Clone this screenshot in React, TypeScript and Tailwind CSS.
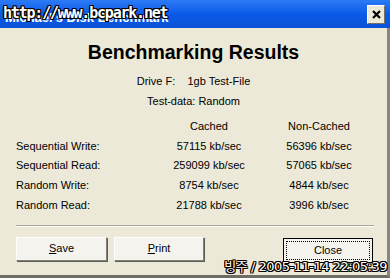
const rows = [
  { label: "Sequential Write:", cached: "57115 kb/sec", nonCached: "56396 kb/sec" },
  { label: "Sequential Read:", cached: "259099 kb/sec", nonCached: "57065 kb/sec" },
  { label: "Random Write:", cached: "8754 kb/sec", nonCached: "4844 kb/sec" },
  { label: "Random Read:", cached: "21788 kb/sec", nonCached: "3996 kb/sec" },
];

const outline =
  "[text-shadow:1px_0_0_#000,-1px_0_0_#000,0_1px_0_#000,0_-1px_0_#000,1px_1px_0_#000,-1px_-1px_0_#000,1px_-1px_0_#000,-1px_1px_0_#000]";

export default function App() {
  return (
    <div className="relative w-[390px] h-[278px] flex flex-col bg-[#ece9d8] font-['Liberation_Sans',Arial,sans-serif] text-[11px] text-black overflow-hidden">
      {/* Title bar */}
      <div className="relative h-[28px] shrink-0 flex items-center justify-between pl-[5px] pr-[4px] bg-gradient-to-b from-[#2b7af5] via-[#0a5ae8] to-[#0b52d6]">
        <span className="text-white font-bold text-[13px] mt-[8px] tracking-[0px]">Michael's Disk Benchmark</span>
        <div className="w-[18px] h-[19px] mt-[1px] mr-[1px] flex items-center justify-center bg-[#ece9d8] border border-t-white border-l-white border-r-[#716f64] border-b-[#716f64]">
          <svg width="9" height="9" viewBox="0 0 9 9">
            <path d="M1 1L8 8M8 1L1 8" stroke="#000" strokeWidth="2.2" />
          </svg>
        </div>
        <span className={`absolute left-[3px] top-[2px] text-white font-bold text-[15px] font-['DejaVu_Sans_Mono',monospace] tracking-[-1.2px] ${outline}`}>
          http://www.bcpark.net
        </span>
      </div>

      {/* Body */}
      <div className="flex-1 flex flex-col border-r-[3px] border-b-[3px] border-r-[#8a8778] border-b-[#6f6d62]">
        <h1 className="text-center font-bold text-[19.5px] mt-[11px] leading-[26px]">
          Benchmarking Results
        </h1>
        <div className="text-center mt-[6px] leading-[20px]">
          <div>Drive F:&nbsp;&nbsp;&nbsp; 1gb Test-File</div>
          <div>Test-data: Random</div>
        </div>

        <div className="grid grid-cols-[138px_110px_110px] pl-[16px] mt-[6px] leading-[19.7px]">
          <div />
          <div className="text-center">Cached</div>
          <div className="text-center">Non-Cached</div>
          {rows.map((r) => (
            <div key={r.label} className="contents">
              <div>{r.label}</div>
              <div className="text-center">{r.cached}</div>
              <div className="text-center">{r.nonCached}</div>
            </div>
          ))}
        </div>

        <div className="ml-[16px] mr-[13px] mt-[9px] border-t border-t-[#aca899] border-b border-b-white" />

        <div className="flex items-start pl-[16px] pr-[14px] mt-[10px]">
          <button className="w-[91px] h-[24px] bg-[#f4f3ee] border border-t-white border-l-white border-r-[#848278] border-b-[#848278] shadow-[1px_1px_0_#5c5b54]">
            <span className="underline">S</span>ave
          </button>
          <button className="ml-[7px] w-[90px] h-[24px] bg-[#f4f3ee] border border-t-white border-l-white border-r-[#848278] border-b-[#848278] shadow-[1px_1px_0_#5c5b54]">
            <span className="underline">P</span>rint
          </button>
          <button className="ml-auto w-[90px] h-[25px] mt-[1px] bg-[#f4f3ee] border border-black p-[2px]">
            <span className="flex w-full h-full items-center justify-center border border-dotted border-black">Close</span>
          </button>
        </div>
      </div>

      <span className={`absolute right-[3px] top-[257px] text-white text-[13px] font-['DejaVu_Sans','Noto_Sans_CJK_KR',sans-serif] tracking-[-0.5px] ${outline}`}>
        빙주 / 2005-11-14 22:05:39
      </span>
    </div>
  );
}
